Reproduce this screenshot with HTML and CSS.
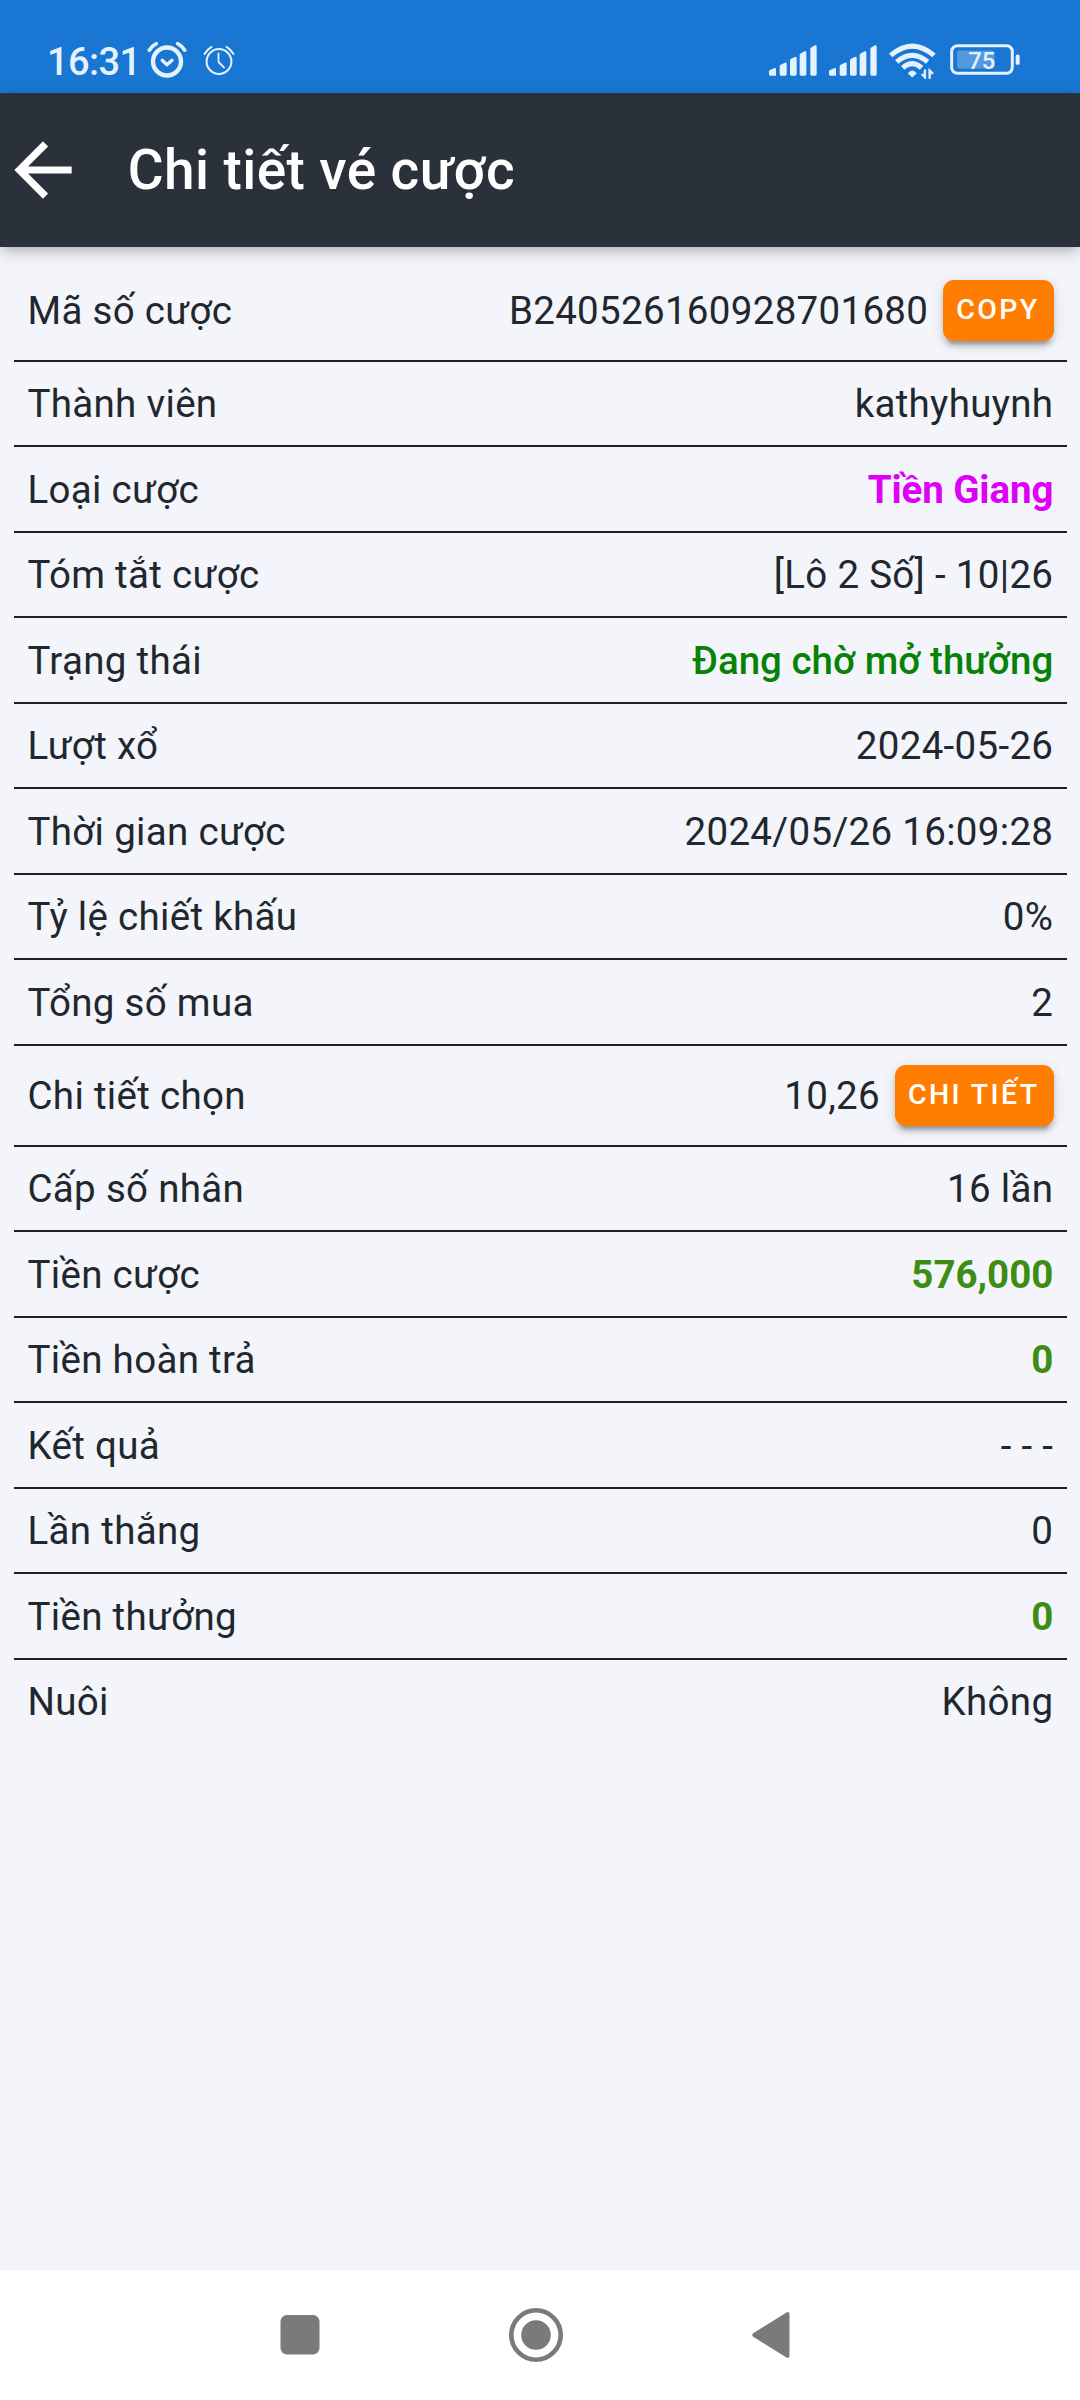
FILE: index.html
```html
<!DOCTYPE html>
<html lang="vi">
<head>
<meta charset="utf-8">
<title>Chi tiết vé cược</title>
<link rel="stylesheet" href="styles.css">
</head>
<body>
<div class="screen">
  <div class="status">
    <span class="time">16:31</span>
    <svg class="alarm" viewBox="0 0 40 38" fill="none" stroke="currentColor" stroke-linecap="round" stroke-linejoin="round"><circle cx="20" cy="20.5" r="14" stroke-width="4.4"/><path d="M15.200 19.300l4.800 4.400 5-4.400" stroke-width="3.400"/><path d="M2.300 9.200Q5 5 9.300 2.700M37.700 9.200Q35 5 30.700 2.700" stroke-width="3.600"/></svg>
    <svg class="alarm-small" viewBox="0 0 32 30" fill="none" stroke="currentColor" stroke-linecap="round"><circle cx="16" cy="16.500" r="12.400" stroke-width="2"/><path d="M15.500 8.500V17L21 22.500" stroke-width="1.800" stroke-linejoin="round"/><path d="M1.500 9Q4.500 4 8.500 1.800M30.500 9Q27.500 4 23.500 1.800" stroke-width="2"/></svg>
    <div class="status-right">
      <svg class="signal" viewBox="88 75 144 93" fill="currentColor"><path id="bars" d="M88 154Q88 152 91 150L105 144Q109 143 109 147V167H92Q88 167 88 163ZM120 139Q120 136 123 134L136 128Q141 126 141 130V163Q141 167 137 167H124Q120 167 120 163ZM151 122Q151 118 154 116L166 111Q171 109 171 113V163Q171 167 167 167H155Q151 167 151 163ZM180 106Q180 102 184 100L195 94Q200 92 200 97V163Q200 167 196 167H184Q180 167 180 163ZM212 88Q212 84 216 82L226 76Q231 74 231 80V163Q231 167 227 167H216Q212 167 212 163Z"/></svg>
      <svg class="signal second" viewBox="88 75 144 93" fill="currentColor"><use href="#bars"/></svg>
      <svg class="wifi" viewBox="449 69 140 107" fill="none" stroke="currentColor"><path d="M454 106Q518 50 583 106" stroke-width="15"/><path d="M472 125Q518 86 564 125" stroke-width="15"/><path d="M490 143Q518 118 546 143" stroke-width="15"/><path d="M505 159Q518 143 532 159L518 172Z" fill="currentColor" stroke="none"/><path d="M556 148V171L547 161M570 175V151L580 161" stroke-width="7"/></svg>
      <svg class="battery" viewBox="632 74 209 92"><rect x="637" y="79" width="181" height="82" rx="17" fill="none" stroke="currentColor" stroke-width="9"/><rect x="653" y="93" width="112" height="54" rx="8" fill="#5399e0"/><rect x="828" y="105" width="12" height="31" rx="5" fill="currentColor"/><text x="727" y="147" text-anchor="middle" class="level">75</text></svg>
    </div>
  </div>

  <header class="appbar">
    <svg class="back" viewBox="0 0 24 24" fill="currentColor"><path d="M20 11H7.830l5.590-5.590L12 4l-8 8 8 8 1.410-1.410L7.830 13H20v-2z"/></svg>
    <h1 class="title">Chi tiết vé cược</h1>
  </header>

  <main class="list">
    <div class="row action"><span>Mã số cược</span><span class="value">B240526160928701680<button class="btn">COPY</button></span></div>
    <div class="row"><span>Thành viên</span><span>kathyhuynh</span></div>
    <div class="row"><span>Loại cược</span><span class="region">Tiền Giang</span></div>
    <div class="row"><span>Tóm tắt cược</span><span>[Lô 2 Số] - 10|26</span></div>
    <div class="row"><span>Trạng thái</span><span class="pending">Đang chờ mở thưởng</span></div>
    <div class="row"><span>Lượt xổ</span><span>2024-05-26</span></div>
    <div class="row"><span>Thời gian cược</span><span>2024/05/26 16:09:28</span></div>
    <div class="row"><span>Tỷ lệ chiết khấu</span><span>0%</span></div>
    <div class="row"><span>Tổng số mua</span><span>2</span></div>
    <div class="row action"><span>Chi tiết chọn</span><span class="value">10,26<button class="btn">CHI TIẾT</button></span></div>
    <div class="row"><span>Cấp số nhân</span><span>16 lần</span></div>
    <div class="row"><span>Tiền cược</span><span class="money">576,000</span></div>
    <div class="row"><span>Tiền hoàn trả</span><span class="money">0</span></div>
    <div class="row"><span>Kết quả</span><span>- - -</span></div>
    <div class="row"><span>Lần thắng</span><span>0</span></div>
    <div class="row"><span>Tiền thưởng</span><span class="money">0</span></div>
    <div class="row"><span>Nuôi</span><span>Không</span></div>
  </main>

  <nav class="navbar">
    <svg class="key" viewBox="0 0 56 56" fill="currentColor"><rect x="8.500" y="8" width="39" height="39.500" rx="6.500"/></svg>
    <svg class="key" viewBox="0 0 56 56" fill="currentColor"><circle cx="28" cy="28" r="24.700" fill="none" stroke="currentColor" stroke-width="4.600"/><circle cx="28" cy="28" r="14.800"/></svg>
    <svg class="key" viewBox="0 0 56 56" fill="currentColor"><path d="M10.500 26L43.500 5.500Q46.500 4 46.500 7.500V48.500Q46.500 52 43.500 50.500L10.500 30Q8 28 10.500 26Z"/></svg>
  </nav>
</div>
</body>
</html>
```
FILE: styles.css
```css
* { box-sizing: border-box; }
body {
  margin: 0;
  background: #f3f5fa;
  font-family: Roboto, "Noto Sans", sans-serif;
  color: #21272e;
}
svg { display: block; flex: none; }
.screen {
  width: 1080px;
  height: 2400px;
  display: flex;
  flex-direction: column;
  overflow: hidden;
}
.status {
  height: 93px;
  flex: none;
  display: flex;
  align-items: flex-start;
  padding: 40px 59.6px 0 47px;
  background: #1976d2;
  color: #e3f2fd;
}
.time {
  width: 100px;
  font-size: 38px;
  font-weight: 500;
  line-height: 45px;
  letter-spacing: -.6px;
}
.alarm { width: 40px; height: 38px; margin-top: 1px; }
.alarm-small { width: 32px; height: 30px; margin: 5px 0 0 16px; }
.status-right { display: flex; margin-left: auto; }
.signal { width: 48px; height: 31px; margin-top: 5px; }
.second { margin-left: 12px; }
.wifi { width: 47px; height: 36px; margin: 3px 0 0 12.3px; }
.battery { width: 70px; height: 31px; margin: 4px 0 0 14px; }
.level { font: 500 71px Roboto, sans-serif; fill: #e3f2fd; }

.appbar {
  height: 154px;
  flex: none;
  display: flex;
  align-items: center;
  background: #2a313b;
  color: #fff;
  box-shadow: 0 5px 11px -3px rgba(0,0,0,.2), 0 11px 14px rgba(0,0,0,.05), 0 3px 14px rgba(0,0,0,.08);
}
.back { width: 86px; height: 86px; margin-left: .4px; }
.title {
  margin: 0 0 0 41.4px;
  font-size: 55px;
  font-weight: 500;
  line-height: 82px;
  letter-spacing: .4px;
}

.list {
  flex: 1;
  display: flex;
  flex-direction: column;
  padding: 13.5px 13.5px 0 13.75px;
}
.row {
  height: 85.5px;
  flex: none;
  display: flex;
  justify-content: space-between;
  align-items: center;
  padding: 1.5px 13.2px 0 13.75px;
  border-bottom: 2px solid #1d1f26;
  font-size: 38.5px;
  line-height: 58px;
  letter-spacing: .31px;
}
.row:last-child { border-color: transparent; }
.action { height: 101px; padding-right: 12.5px; }
.value { display: flex; align-items: center; gap: 14.5px; }
.btn {
  height: 61px;
  margin-top: -1.5px;
  padding: 0 14.4px 0 13.4px;
  border: 0;
  border-radius: 11px;
  background: #ff7e02;
  color: #fff;
  font: 500 28.5px/60px Roboto, sans-serif;
  letter-spacing: 2.4px;
  box-shadow: 0 8px 3px -5.500px rgba(0,0,0,.2), 0 5.500px 5.500px rgba(0,0,0,.14), 0 3px 14px rgba(0,0,0,.12);
}
.region { color: #dd00f5; font-weight: 700; letter-spacing: -.1px; }
.pending { color: #078207; font-weight: 500; letter-spacing: 0; }
.money { color: #3c8c16; font-weight: 700; letter-spacing: 0; }

.navbar {
  height: 130px;
  flex: none;
  display: flex;
  justify-content: space-between;
  align-items: center;
  padding: 0 281px 0 272px;
  background: #fff;
  color: #7a7a7a;
}
.key { width: 56px; height: 56px; }
```
